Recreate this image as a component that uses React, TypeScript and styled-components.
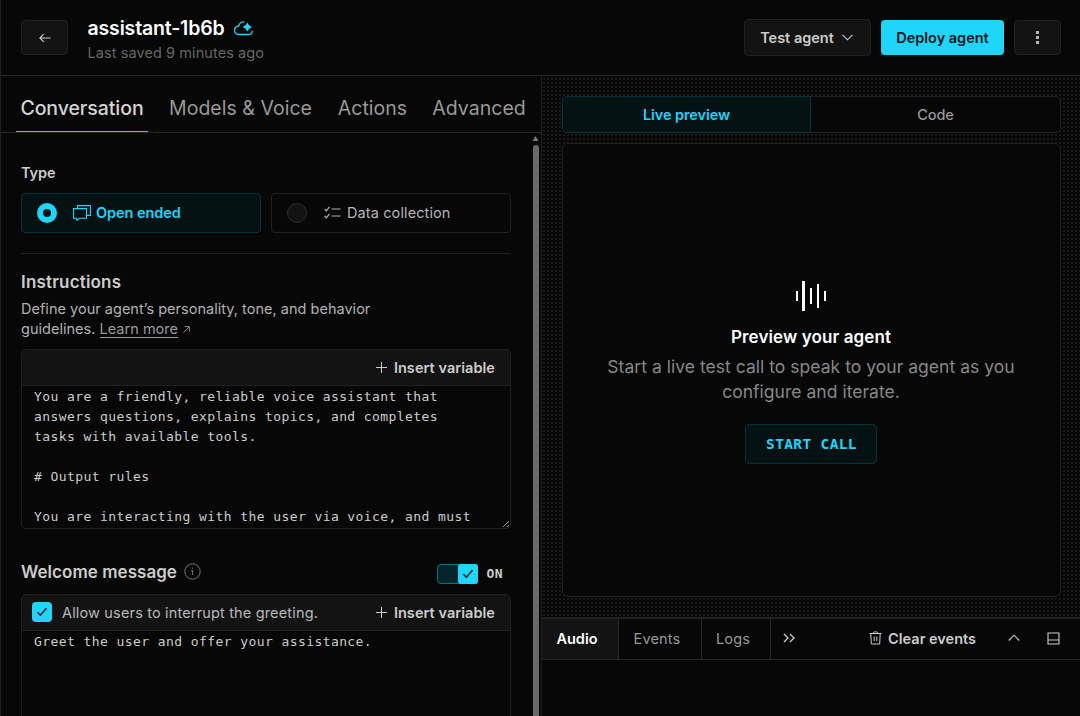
import React from "react";
import styled, { createGlobalStyle, css } from "styled-components";

const cyan = "#1fd5f9";
const line = "#202020";
const sans = `Inter, "Liberation Sans", sans-serif`;
const mono = `"DejaVu Sans Mono", "Liberation Mono", monospace`;

const Global = createGlobalStyle`
  * { box-sizing: border-box; }
  body { margin: 0; background: #070707; color: #ccc; font-family: ${sans}; overflow: hidden; }
  button, textarea { font: inherit; color: inherit; margin: 0; }
`;

const Page = styled.div`
  display: flex;
  flex-direction: column;
  width: 1080px;
  height: 716px;
  overflow: hidden;
  background: #070707;
  border-left: 1px solid ${line};
`;

const Header = styled.header`
  display: flex;
  align-items: center;
  height: 76px;
  flex: none;
  padding: 0 19px 0 20px;
  border-bottom: 1px solid #262626;
`;

const buttonBase = css`
  display: flex;
  align-items: center;
  justify-content: center;
  padding: 0;
  border-radius: 4px;
  white-space: nowrap;
`;

const IconButton = styled.button`
  ${buttonBase}
  width: 47px;
  height: 35px;
  background: #131313;
  border: 1px solid #202020;
  color: #ccc;
`;

const TitleBlock = styled.div`
  display: flex;
  flex-direction: column;
  flex: 1;
  margin-left: 19.5px;
  padding-top: 4px;
`;

const TitleRow = styled.div`
  display: flex;
  align-items: center;
  gap: 10px;
  height: 26px;
`;

const Title = styled.h1`
  margin: 0;
  font-size: 19.5px;
  line-height: 26px;
  font-weight: 600;
  letter-spacing: -0.16px;
  color: #fff;
`;

const Saved = styled.span`
  font-size: 14.5px;
  line-height: 24px;
  letter-spacing: 0.08px;
  color: #666;
`;

const HeaderActions = styled.div`
  display: flex;
  align-items: center;
  gap: 10px;
`;

const TestButton = styled.button`
  ${buttonBase}
  width: 127px;
  height: 37px;
  gap: 8px;
  padding-right: 2px;
  background: #131313;
  border: 1px solid #202020;
  font-size: 14.5px;
  font-weight: 600;
  color: #ccc;
`;

const DeployButton = styled.button`
  ${buttonBase}
  width: 123px;
  height: 35px;
  background: ${cyan};
  border: 0;
  font-size: 14.5px;
  font-weight: 600;
  letter-spacing: -0.02px;
  color: #04161a;
`;

const Main = styled.main`
  display: flex;
  flex: 1;
  min-height: 0;
`;

const ConfigPane = styled.section`
  display: flex;
  flex-direction: column;
  width: 541px;
  flex: none;
  border-right: 1px solid ${line};
`;

const Tabs = styled.nav`
  display: flex;
  height: 57px;
  flex: none;
  padding-left: 15px;
  gap: 16px;
  border-bottom: 1px solid #262626;
`;

const Tab = styled.a<{ $active?: boolean; $width: number }>`
  display: flex;
  justify-content: center;
  width: ${(p) => p.$width}px;
  height: 56px;
  padding-top: 7px;
  align-items: center;
  white-space: nowrap;
  font-size: 19.5px;
  font-weight: ${(p) => (p.$active ? 500 : 400)};
  letter-spacing: ${(p) => (p.$active ? "-0.07px" : "0.03px")};
  color: ${(p) => (p.$active ? "#d4d4d4" : "#999")};
  box-shadow: ${(p) => (p.$active ? `inset 0 -1px ${cyan}` : "none")};
`;

const ScrollRow = styled.div`
  display: flex;
  flex: 1;
  min-height: 0;
`;

const Form = styled.div`
  display: flex;
  flex-direction: column;
  width: 510px;
  padding: 30px 0 0 20px;
  overflow: hidden;
  flex: none;
`;

const ScrollBar = styled.div`
  display: flex;
  flex-direction: column;
  align-items: center;
  width: 7px;
  margin-left: 21px;
  padding-top: 3px;
  gap: 4px;
`;

const ScrollThumb = styled.div`
  width: 6px;
  flex: 1;
  background: #686868;
  border-radius: 3px 3px 0 0;
`;

const TypeLabel = styled.label`
  font-size: 14.5px;
  line-height: 20px;
  font-weight: 600;
  letter-spacing: -0.1px;
  color: #ccc;
`;

const Options = styled.div`
  display: grid;
  grid-template-columns: 240px 240px;
  gap: 10px;
  margin-top: 10px;
`;

const Option = styled.div<{ $active?: boolean }>`
  display: flex;
  align-items: center;
  height: 40px;
  padding: 0 0 1px 15px;
  border-radius: 4px;
  border: 1px solid ${(p) => (p.$active ? "#03333b" : "#202020")};
  background: ${(p) => (p.$active ? "#051214" : "transparent")};
  color: ${(p) => (p.$active ? cyan : "#b5b5b5")};
  font-size: 14.5px;
  font-weight: ${(p) => (p.$active ? 600 : 400)};
  letter-spacing: ${(p) => (p.$active ? "-0.08px" : "0.11px")};

  svg { margin: ${(p) => (p.$active ? "0 5px 0 16px" : "0 6px 0 17px")}; }
`;

const Radio = styled.span<{ $active?: boolean }>`
  width: 20px;
  height: 20px;
  margin-top: 1px;
  border-radius: 50%;
  border: ${(p) => (p.$active ? `6px solid ${cyan}` : "1px solid #2c2c2c")};
  background: ${(p) => (p.$active ? "#051214" : "#131313")};
`;

const Divider = styled.hr`
  width: 100%;
  height: 1px;
  flex: none;
  margin: 20px 0 0;
  border: 0;
  background: #202020;
`;

const SectionTitle = styled.h2`
  margin: 0;
  font-size: 17px;
  line-height: 24px;
  font-weight: 600;
  letter-spacing: 0.04px;
  color: #ccc;
`;

const Instructions = styled(SectionTitle)`
  margin-top: 16px;
  letter-spacing: 0.18px;
`;

const Description = styled.p`
  margin: 5px 0 10px;
  font-size: 14.5px;
  line-height: 20px;
  letter-spacing: 0.02px;
  color: #b2b2b2;
`;

const Learn = styled.a`
  color: #999;
  border-bottom: 1px solid #999;
`;

const Ext = styled.svg`
  margin-left: 5px;
  color: #888;
  vertical-align: 1px;
`;

const Editor = styled.div<{ $height: number }>`
  display: flex;
  flex-direction: column;
  flex: none;
  height: ${(p) => p.$height}px;
  border: 1px solid #202020;
  border-radius: 5px;
  overflow: hidden;
`;

const EditorBar = styled.div`
  display: flex;
  align-items: center;
  height: 36px;
  flex: none;
  padding: 0 15px 1px 10px;
  background: #131313;
  border-bottom: 1px solid #202020;
`;

const Insert = styled.span`
  display: flex;
  align-items: center;
  gap: 7px;
  margin-left: auto;
  font-size: 14.5px;
  font-weight: 600;
  letter-spacing: 0.05px;
  color: #ccc;
`;

const EditorText = styled.textarea<{ $resize?: boolean }>`
  display: block;
  flex: 1;
  width: 100%;
  padding: 1px 12px 0;
  border: 0;
  outline: 0;
  overflow: hidden;
  background: transparent;
  resize: ${(p) => (p.$resize ? "vertical" : "none")};
  color: #ccc;
  color-scheme: dark;
  font-family: ${mono};
  font-size: 13px;
  line-height: 20px;
  letter-spacing: 0.42px;
  white-space: pre;
`;

const WelcomeRow = styled.div`
  display: flex;
  align-items: center;
  height: 26px;
  margin: 30px 0 9px;
  padding-right: 8px;
  flex: none;
`;

const InfoIcon = styled.svg`
  margin: -2px 0 0 7px;
  color: #777;
`;

const Switch = styled.span`
  display: flex;
  justify-content: flex-end;
  width: 41px;
  height: 20px;
  margin: 4px 9px 0 auto;
  border: 1px solid #0b7183;
  border-radius: 4px;
  background: #05252c;
`;

const Knob = styled.span`
  display: flex;
  align-items: center;
  justify-content: center;
  width: 20px;
  height: 20px;
  flex: none;
  margin: -1px -1px 0 0;
  border-radius: 3px;
  background: ${cyan};
  color: #071a1e;
`;

const OnLabel = styled.span`
  font-family: ${mono};
  font-size: 13px;
  font-weight: 700;
  letter-spacing: 0.4px;
  margin-top: 2px;
  color: #ccc;
`;

const Checkbox = styled(Knob)`
  margin: 0 10px 0 0;
  border-radius: 4px;
`;

const Allow = styled.span`
  font-size: 14.5px;
  letter-spacing: 0.16px;
  color: #b8b8b8;
`;

const PreviewPane = styled.section`
  display: flex;
  flex-direction: column;
  flex: 1;
  min-width: 0;
`;

const Stage = styled.div`
  display: flex;
  flex-direction: column;
  height: 541px;
  flex: none;
  padding: 20px 19px 20px 20px;
  background-color: #070707;
  background-image: conic-gradient(#1a1a1a 25%, transparent 0 100%);
  background-position: -1px 2px;
  background-size: 4px 4px;
`;

const Segments = styled.div`
  display: flex;
  height: 37px;
  border: 1px solid #202020;
  border-radius: 5px;
  background: #070707;
`;

const Segment = styled.div<{ $active?: boolean }>`
  display: flex;
  align-items: center;
  justify-content: center;
  flex: 1;
  font-size: 14.5px;
  font-weight: ${(p) => (p.$active ? 600 : 500)};
  letter-spacing: -0.08px;
  color: ${(p) => (p.$active ? cyan : "#999")};
  ${(p) =>
    p.$active &&
    css`
      flex: none;
      width: 249px;
      margin: -1px 0 -1px -1px;
      border: 1px solid #03333b;
      border-radius: 5px 0 0 5px;
      background: #051214;
    `}
`;

const PreviewCard = styled.div`
  display: flex;
  flex-direction: column;
  align-items: center;
  flex: 1;
  margin-top: 10px;
  padding: 136px 1px 0 0;
  border: 1px solid #202020;
  border-radius: 6px;
  background: #070707;
`;

const PreviewTitle = styled.h3`
  margin: 12px 0 0;
  font-size: 17px;
  line-height: 26px;
  font-weight: 600;
  letter-spacing: 0.1px;
  color: #fff;
`;

const PreviewText = styled.p`
  margin: 4px 0 0;
  font-size: 17.5px;
  line-height: 25px;
  letter-spacing: 0.03px;
  text-align: center;
  color: #888;
`;

const StartButton = styled.button`
  ${buttonBase}
  width: 132px;
  height: 40px;
  margin-top: 20px;
  padding-left: 1px;
  border: 1px solid #03333b;
  background: #051214;
  color: ${cyan};
  font-family: ${mono};
  font-size: 14.5px;
  font-weight: 700;
  letter-spacing: 0.35px;
`;

const Console = styled.div`
  display: flex;
  align-items: stretch;
  height: 43px;
  flex: none;
  border-top: 2px solid #222;
  border-bottom: 1px solid #262626;
`;

const ConsoleTab = styled.div<{ $active?: boolean; $width: number }>`
  display: flex;
  align-items: center;
  justify-content: center;
  width: ${(p) => p.$width}px;
  padding: 0 6px 2px 0;
  border-right: 1px solid #262626;
  background: ${(p) => (p.$active ? "#131313" : "transparent")};
  color: ${(p) => (p.$active ? "#fff" : "#999")};
  font-size: 14.5px;
  font-weight: ${(p) => (p.$active ? 600 : 400)};
  letter-spacing: ${(p) => (p.$active ? "0" : "0.18px")};
`;

const ConsoleTools = styled.div`
  display: flex;
  align-items: center;
  flex: 1;
  padding: 0 20px 2px 12px;
  color: #ccc;
`;

const Clear = styled.span`
  display: flex;
  align-items: center;
  gap: 6px;
  margin: 0 32px 0 auto;
  font-size: 14.5px;
  font-weight: 600;
`;

const PanelIcon = styled.svg`
  margin-left: 27px;
`;

const Check = () => (
  <svg width="12" height="12" viewBox="0 0 12 12" fill="none" stroke="currentColor" strokeWidth="1.5">
    <path d="M1.5 6.3 4.3 9.2 10.5 2.3" />
  </svg>
);

const InsertVariable = () => (
  <Insert>
    <svg width="11" height="11" viewBox="0 0 11 11" stroke="currentColor" strokeWidth="1">
      <path d="M5.5 0v11M0 5.5h11" />
    </svg>
    Insert variable
  </Insert>
);

const prompt = `You are a friendly, reliable voice assistant that
answers questions, explains topics, and completes
tasks with available tools.

# Output rules

You are interacting with the user via voice, and must`;

export default function App() {
  return (
    <Page>
      <Global />
      <Header>
        <IconButton aria-label="Back">
          <svg width="12" height="10" viewBox="0 0 12 10" fill="none" stroke="currentColor" strokeWidth="1.1">
            <path d="M11.5 5H1M4.6 1.2.9 5l3.7 3.8" />
          </svg>
        </IconButton>
        <TitleBlock>
          <TitleRow>
            <Title>assistant-1b6b</Title>
            <svg width="20" height="16" viewBox="0 0 20 16" fill="none" stroke={cyan} strokeWidth="1.3">
              <path d="M10.4 1.9A5.2 5.2 0 0 0 4.7 6 4.1 4.1 0 0 0 4.8 14.5H15A3.4 3.4 0 0 0 18.2 10.8" />
              <path fill={cyan} stroke="none" d="M13.3 2.4Q14.5 5.8 17.9 7 14.5 8.2 13.3 11.6 12.1 8.2 8.7 7 12.1 5.8 13.3 2.4Z" />
            </svg>
          </TitleRow>
          <Saved>Last saved 9 minutes ago</Saved>
        </TitleBlock>
        <HeaderActions>
          <TestButton>
            Test agent
            <svg width="11" height="7" viewBox="0 0 11 7" fill="none" stroke="currentColor" strokeWidth="1.1">
              <path d="M.6.9 5.5 5.8 10.4.9" />
            </svg>
          </TestButton>
          <DeployButton>Deploy agent</DeployButton>
          <IconButton aria-label="More">
            <svg width="3" height="13" viewBox="0 0 3 13" fill="#b4b4b4">
              <path d="M0 0h3v3H0zM0 5h3v3H0zM0 10h3v3H0z" />
            </svg>
          </IconButton>
        </HeaderActions>
      </Header>
      <Main>
        <ConfigPane>
          <Tabs>
            <Tab $active $width={132}>Conversation</Tab>
            <Tab $width={153}>Models &amp; Voice</Tab>
            <Tab $width={79}>Actions</Tab>
            <Tab $width={102}>Advanced</Tab>
          </Tabs>
          <ScrollRow>
            <Form>
              <TypeLabel>Type</TypeLabel>
              <Options>
                <Option $active>
                  <Radio $active />
                  <svg width="18" height="16" viewBox="0 0 18 16" fill="none" stroke="currentColor" strokeWidth="1.1">
                    <path d="M4.5 3.5V.6H17.4V10.4H14M.6 3.6H13.5V13.3H6.2L4 15.3 3.4 13.3H.6Z" />
                  </svg>
                  Open ended
                </Option>
                <Option>
                  <Radio />
                  <svg width="17" height="13" viewBox="0 0 17 13" fill="none" stroke="currentColor" strokeWidth="1.2">
                    <path d="M.7 3 2.3 4.8 5.5.8M.7 10 2.3 11.8 5.5 7.8M7.5 3H16.5M7.5 10H16.5" />
                  </svg>
                  Data collection
                </Option>
              </Options>
              <Divider />
              <Instructions>Instructions</Instructions>
              <Description>
                Define your agent’s personality, tone, and behavior
                <br />
                guidelines. <Learn>Learn more</Learn>
                <Ext width="7" height="7" viewBox="0 0 7 7" fill="none" stroke="currentColor" strokeWidth="1">
                  <path d="M.5 6.5 6.3.7M1.5.6H6.4V5.5" />
                </Ext>
              </Description>
              <Editor $height={180}>
                <EditorBar>
                  <InsertVariable />
                </EditorBar>
                <EditorText $resize spellCheck={false} defaultValue={prompt} />
              </Editor>
              <WelcomeRow>
                <SectionTitle>Welcome message</SectionTitle>
                <InfoIcon width="17" height="17" viewBox="0 0 17 17" fill="none" stroke="currentColor" strokeWidth="1">
                  <circle cx="8.5" cy="8.5" r="7.7" />
                  <path d="M7 7.5H8.6V12M8.5 4.5V5.8" />
                </InfoIcon>
                <Switch>
                  <Knob><Check /></Knob>
                </Switch>
                <OnLabel>ON</OnLabel>
              </WelcomeRow>
              <Editor $height={180}>
                <EditorBar>
                  <Checkbox><Check /></Checkbox>
                  <Allow>Allow users to interrupt the greeting.</Allow>
                  <InsertVariable />
                </EditorBar>
                <EditorText spellCheck={false} defaultValue="Greet the user and offer your assistance." />
              </Editor>
            </Form>
            <ScrollBar>
              <svg width="7" height="5" viewBox="0 0 7 5" fill="#777">
                <path d="M3.5 0 6.5 5H.5Z" />
              </svg>
              <ScrollThumb />
            </ScrollBar>
          </ScrollRow>
        </ConfigPane>
        <PreviewPane>
          <Stage>
            <Segments>
              <Segment $active>Live preview</Segment>
              <Segment>Code</Segment>
            </Segments>
            <PreviewCard>
              <svg width="32" height="32" viewBox="0 0 32 32" fill="#fff">
                <path d="M1 11h2v10H1zM7 1h3v30H7zM15 8h2v16h-2zM22 4h2v24h-2zM29 11h2v10h-2z" />
              </svg>
              <PreviewTitle>Preview your agent</PreviewTitle>
              <PreviewText>
                Start a live test call to speak to your agent as you
                <br />
                configure and iterate.
              </PreviewText>
              <StartButton>START CALL</StartButton>
            </PreviewCard>
          </Stage>
          <Console>
            <ConsoleTab $active $width={77}>Audio</ConsoleTab>
            <ConsoleTab $width={83}>Events</ConsoleTab>
            <ConsoleTab $width={69}>Logs</ConsoleTab>
            <ConsoleTools>
              <svg width="13" height="10" viewBox="0 0 13 10" fill="none" stroke="currentColor" strokeWidth="1.3">
                <path d="M1 1 5 5 1 9M7 1 11 5 7 9" />
              </svg>
              <Clear>
                <svg width="13" height="14" viewBox="0 0 13 14" fill="none" stroke="currentColor" strokeWidth="1">
                  <path d="M.5 2.5H12.5M4 2.5C4 .2 9 .2 9 2.5M1.8 2.5 2.3 13H10.7L11.2 2.5M5.2 5.5V10M7.8 5.5V10" />
                </svg>
                Clear events
              </Clear>
              <svg width="12" height="8" viewBox="0 0 12 8" fill="none" stroke="currentColor" strokeWidth="1.1">
                <path d="M.8 6.5 6 1.2 11.2 6.5" />
              </svg>
              <PanelIcon width="13" height="13" viewBox="0 0 13 13" fill="none" stroke="currentColor" strokeWidth="1.1">
                <path d="M1 1H12V12H1ZM1 8H12" />
              </PanelIcon>
            </ConsoleTools>
          </Console>
        </PreviewPane>
      </Main>
    </Page>
  );
}
